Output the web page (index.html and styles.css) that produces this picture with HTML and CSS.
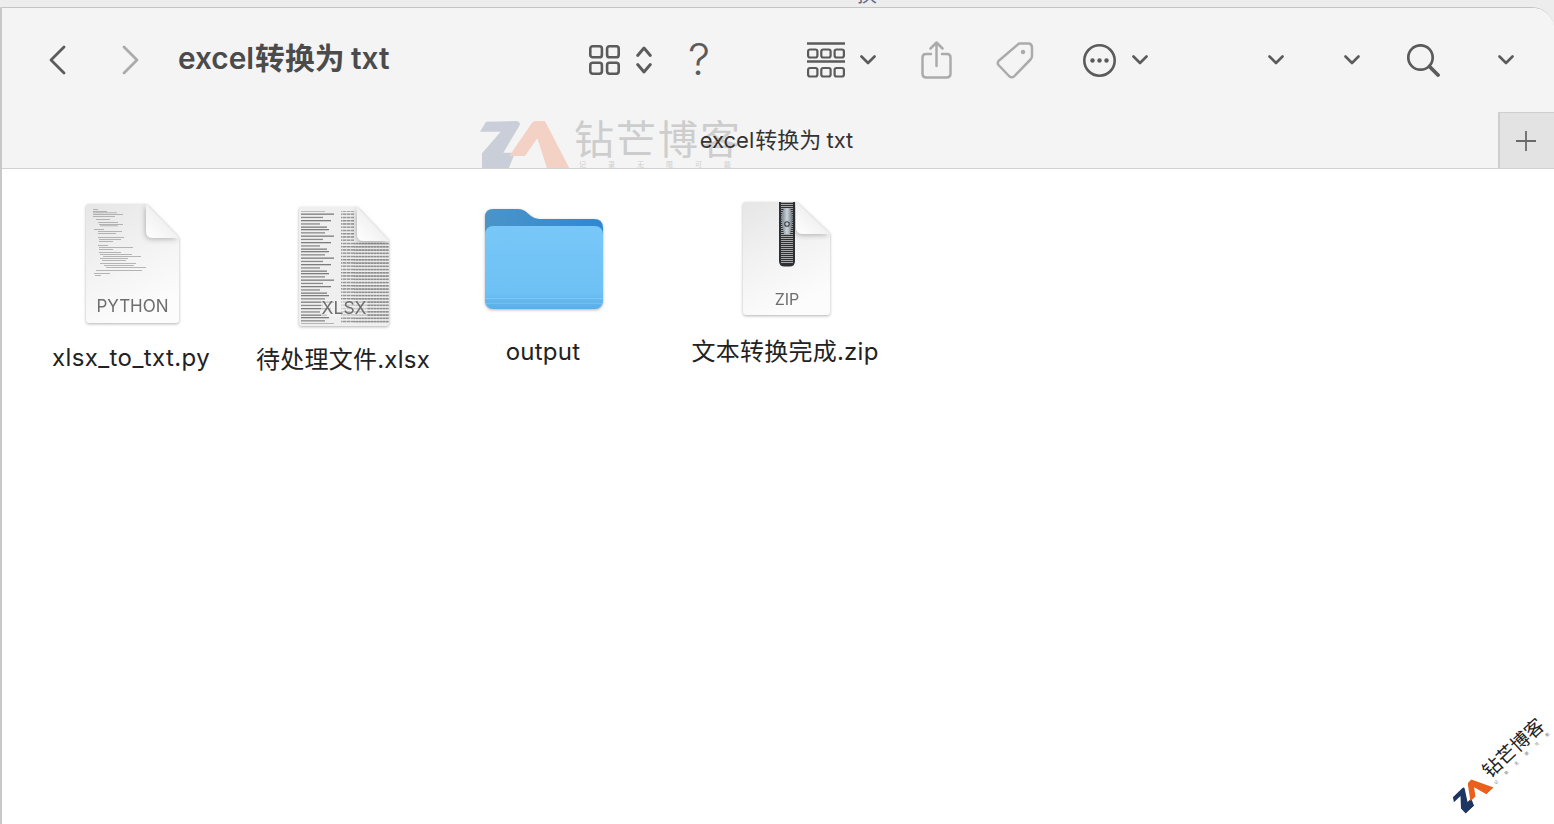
FILE: index.html
```html
<!DOCTYPE html>
<html lang="zh-CN">
<head>
    <meta charset="UTF-8">
    <title>excel转换为 txt</title>
    <link rel="stylesheet" href="styles.css">
</head>
<body>
    <svg class="defs" width="0" height="0">
        <symbol id="chev" viewBox="0 0 16 10"><path d="M1.500 1.500 8 8l6.500-6.500" fill="none" stroke="currentColor" stroke-width="2.600" stroke-linecap="round" stroke-linejoin="round"/></symbol>
        <symbol id="za-z" viewBox="0 0 300 180"><path d="M48 35 138 33Q152 34 149 46L100 128H135L115 178H36V130L92 65H30Z"/></symbol>
        <symbol id="za-a" viewBox="0 0 300 180"><path d="M118 138 185 40Q190 33 198 33H225L300 178H232L202 85 165 138Z"/></symbol>
    </svg>

    <div class="top-strip"><span class="behind-glyph">换</span></div>

    <div class="window">
        <div class="toolbar">
            <svg class="ico back" width="18" height="30" viewBox="0 0 18 30"><path d="M16 2 3 15l13 13" fill="none" stroke="currentColor" stroke-width="2.800" stroke-linecap="round" stroke-linejoin="round"/></svg>
            <svg class="ico off ml-56" width="18" height="30" viewBox="0 0 18 30"><path d="M2 2l13 13L2 28" fill="none" stroke="currentColor" stroke-width="2.800" stroke-linecap="round" stroke-linejoin="round"/></svg>
            <div class="title ml-38">excel<span class="title-cjk">转换为</span> txt</div>

            <svg class="ico ml-199" width="31" height="30" viewBox="0 0 31 30"><g fill="none" stroke="currentColor" stroke-width="2.600"><rect x="1.300" y="1.300" width="11.600" height="11" rx="2.400"/><rect x="18.100" y="1.300" width="11.600" height="11" rx="2.400"/><rect x="1.300" y="17.700" width="11.600" height="11" rx="2.400"/><rect x="18.100" y="17.700" width="11.600" height="11" rx="2.400"/></g></svg>
            <svg class="ico ml-16" width="16" height="30" viewBox="0 0 16 30"><path d="M1.700 10.500 8 3l6.300 7.500M1.700 19.500 8 27l6.300-7.500" fill="none" stroke="currentColor" stroke-width="2.900" stroke-linecap="round" stroke-linejoin="round"/></svg>
            <span class="help ml-36">?</span>

            <svg class="ico ml-98" width="38" height="36" viewBox="0 0 38 36"><g fill="none" stroke="currentColor"><path d="M0 1.500H38M0 19.500H38" stroke-width="2.600"/><g stroke-width="2.200"><rect x="1.100" y="7.500" width="9.300" height="8" rx="2"/><rect x="14.300" y="7.500" width="9.300" height="8" rx="2"/><rect x="27.600" y="7.500" width="9.300" height="8" rx="2"/><rect x="1.100" y="26" width="9.300" height="8.500" rx="2"/><rect x="14.300" y="26" width="9.300" height="8.500" rx="2"/><rect x="27.600" y="26" width="9.300" height="8.500" rx="2"/></g></g></svg>
            <svg class="chev ml-15" width="16" height="10"><use href="#chev"/></svg>

            <svg class="ico off ml-45" width="31" height="38" viewBox="0 0 31 38"><g fill="none" stroke="currentColor" stroke-width="2.500" stroke-linecap="round" stroke-linejoin="round"><path d="M10 13H5Q1.500 13 1.500 16.500V32.500Q1.500 36.500 5.500 36.500H25.500Q29.500 36.500 29.500 32.500V16.500Q29.500 13 26 13H21"/><path d="M15.500 25V2M9.500 7.500 15.500 1.500l6 6"/></g></svg>
            <svg class="ico off ml-44" width="38" height="38" viewBox="0 0 38 38"><g fill="none" stroke="currentColor" stroke-width="2.500" stroke-linejoin="round"><path d="M23 2.500 33 2.500Q36 3 36 7V15Q36 17 34.500 18.500L18 35.500Q15.500 37 13.500 35.500L2.500 24Q1 22 2.500 20Z"/></g><circle cx="27" cy="11" r="2.200" fill="currentColor"/></svg>
            <svg class="ico ml-49" width="33" height="33" viewBox="0 0 33 33"><circle cx="16.500" cy="16.500" r="15.200" fill="none" stroke="currentColor" stroke-width="2.600"/><circle cx="9.500" cy="16.500" r="2.200" fill="currentColor"/><circle cx="16.500" cy="16.500" r="2.200" fill="currentColor"/><circle cx="23.500" cy="16.500" r="2.200" fill="currentColor"/></svg>
            <svg class="chev ml-16" width="16" height="10"><use href="#chev"/></svg>
            <svg class="chev ml-120" width="16" height="10"><use href="#chev"/></svg>
            <svg class="chev ml-60" width="16" height="10"><use href="#chev"/></svg>
            <svg class="ico ml-47" width="33" height="33" viewBox="0 0 33 33"><g fill="none" stroke="currentColor" stroke-linecap="round"><circle cx="13.500" cy="13.500" r="12.200" stroke-width="2.700"/><path d="M22.500 22.500 31 31" stroke-width="3.800"/></g></svg>
            <svg class="chev ml-58" width="16" height="10"><use href="#chev"/></svg>
        </div>

        <div class="tabbar">
            <div class="faded-mark">
                <svg class="za-z" width="100" height="60"><use href="#za-z"/></svg>
                <svg class="za-a" width="100" height="60"><use href="#za-a"/></svg>
                <div class="faded-words">
                    <div class="faded-name">钻芒博客</div>
                    <div class="faded-sub">记录无限可能</div>
                </div>
            </div>
            <div class="tab-title">excel<span class="tab-cjk">转换为</span> txt</div>
            <div class="tab-add">
                <svg width="20" height="20" viewBox="0 0 20 20"><path d="M10 0V20M0 10H20" stroke="currentColor" stroke-width="1.800"/></svg>
            </div>
        </div>

        <div class="files">
            <div class="file file-py">
                <svg class="doc" width="93" height="120" viewBox="0 0 93 120">
                    <defs>
                        <linearGradient id="paper" x1="0" y1="0" x2="0.4" y2="1"><stop offset="0" stop-color="#e6e6e6"/><stop offset="0.55" stop-color="#f3f3f3"/><stop offset="1" stop-color="#fcfcfc"/></linearGradient>
                        <linearGradient id="fold" x1="0" y1="1" x2="1" y2="0"><stop offset="0" stop-color="#ffffff"/><stop offset="0.55" stop-color="#f0f0f0"/><stop offset="1" stop-color="#c8c8c8"/></linearGradient>
                        <filter id="fold-shade" x="-40%" y="-40%" width="180%" height="180%"><feDropShadow dx="-1" dy="1.500" stdDeviation="2.500" flood-color="#000" flood-opacity="0.250"/></filter>
                    </defs>
                    <path d="M3 0H60L93 34V116Q93 119 90 119H3Q0 119 0 116V3Q0 0 3 0Z" fill="url(#paper)"/>
                    <g fill="#9a9a9a">
                        <rect x="7" y="5" width="5" height="0.700"/><rect x="7" y="7" width="14" height="0.700"/><rect x="7" y="8.500" width="24" height="0.700"/><rect x="7" y="10" width="30" height="0.700"/><rect x="7" y="12" width="22" height="0.700"/>
                        <rect x="10" y="15" width="14" height="0.700"/><rect x="12" y="18" width="20" height="0.700"/><rect x="13" y="20" width="24" height="0.700"/><rect x="14" y="21.500" width="18" height="0.700"/>
                        <rect x="8" y="25" width="10" height="0.700"/><rect x="12" y="27" width="24" height="0.700"/><rect x="12" y="29" width="18" height="0.700"/><rect x="12" y="33" width="26" height="0.700"/>
                        <rect x="13" y="35" width="22" height="0.700"/><rect x="13" y="37" width="14" height="0.700"/><rect x="12" y="41" width="10" height="0.700"/><rect x="13" y="43" width="34" height="0.700"/>
                        <rect x="13" y="45" width="14" height="0.700"/><rect x="13" y="48" width="22" height="0.700"/><rect x="14" y="50" width="32" height="0.700"/><rect x="17" y="52" width="38" height="0.700"/>
                        <rect x="14" y="54" width="28" height="0.700"/><rect x="16" y="56" width="24" height="0.700"/><rect x="14" y="59" width="36" height="0.700"/><rect x="18" y="61" width="30" height="0.700"/><rect x="20" y="63" width="40" height="0.700"/>
                        <rect x="10" y="66" width="46" height="0.700"/><rect x="8" y="69" width="16" height="0.700"/><rect x="9" y="71" width="6" height="0.700"/>
                    </g>
                    <path d="M60 0 93 34H67Q60 34 60 27Z" fill="url(#fold)" filter="url(#fold-shade)"/>
                    <text class="doc-kind" x="46.500" y="108" text-anchor="middle" font-size="17">PYTHON</text>
                </svg>
                <div class="file-name">xlsx_to_txt.py</div>
            </div>

            <div class="file file-xlsx">
                <svg class="doc" width="90" height="120" viewBox="0 0 90 120">
                    <defs>
                        <pattern id="rows-a" width="42" height="22" patternUnits="userSpaceOnUse">
                            <rect x="0" y="0" width="30" height="1.300" fill="#7c7c7c"/><rect x="0" y="3.200" width="26" height="1.300" fill="#8a8a8a"/><rect x="2" y="6.500" width="33" height="1.300" fill="#7c7c7c"/><rect x="0" y="9.800" width="24" height="1.300" fill="#8a8a8a"/><rect x="2" y="13" width="30" height="1.300" fill="#7c7c7c"/><rect x="0" y="16.300" width="21" height="1.300" fill="#8a8a8a"/><rect x="0" y="19.500" width="28" height="1.300" fill="#7c7c7c"/>
                        </pattern>
                        <pattern id="rows-b" width="4" height="3.250" patternUnits="userSpaceOnUse"><rect width="3.500" height="1.400" fill="#8c8c8c"/></pattern>
                        <pattern id="rows-c" width="3" height="3.250" patternUnits="userSpaceOnUse"><rect width="2.700" height="1.700" fill="#8e8e8e"/></pattern>
                    </defs>
                    <path d="M2 0H58L90 34V116Q90 119 87 119H2Q0 119 0 116V2Q0 0 2 0Z" fill="#efefef"/>
                    <rect x="2" y="4" width="38" height="113" fill="url(#rows-a)"/>
                    <rect x="42" y="4" width="13" height="113" fill="url(#rows-b)"/>
                    <rect x="55" y="34" width="35" height="83" fill="url(#rows-c)"/>
                    <rect x="22" y="93" width="46" height="17" fill="#f4f4f4" opacity="0.550"/>
                    <path d="M58 0 90 34H65Q58 34 58 27Z" fill="url(#fold)" filter="url(#fold-shade)"/>
                    <text class="doc-kind" x="45" y="107" text-anchor="middle" font-size="17.500">XLSX</text>
                </svg>
                <div class="file-name">待处理文件.xlsx</div>
            </div>

            <div class="file file-dir">
                <svg class="folder" width="118" height="101" viewBox="0 0 118 101">
                    <defs>
                        <linearGradient id="dir-back" x1="0" y1="0" x2="1" y2="0"><stop offset="0" stop-color="#4b94c9"/><stop offset="1" stop-color="#2f88d3"/></linearGradient>
                        <linearGradient id="dir-front" x1="0" y1="0" x2="0" y2="1"><stop offset="0" stop-color="#78c7f8"/><stop offset="0.8" stop-color="#6ec1f5"/><stop offset="1" stop-color="#5aaee8"/></linearGradient>
                    </defs>
                    <path d="M8 0H33Q37 0 40 2L46 7Q50 10 54 10H109Q118 10 118 19V50H0V8Q0 0 8 0Z" fill="url(#dir-back)"/>
                    <rect x="0" y="17" width="118" height="83" rx="8" fill="url(#dir-front)"/>
                    <rect x="0" y="89" width="118" height="1" fill="#8ccdf6" opacity="0.700"/>
                    <rect x="0" y="94" width="118" height="1" fill="#8ccdf6" opacity="0.400"/>
                </svg>
                <div class="file-name">output</div>
            </div>

            <div class="file file-zip">
                <svg class="doc" width="87" height="114" viewBox="0 0 87 114">
                    <defs>
                        <pattern id="teeth" width="12" height="2" patternUnits="userSpaceOnUse"><rect width="12" height="1" fill="#a8a8a8"/></pattern>
                        <linearGradient id="slider" x1="0" y1="0" x2="1" y2="0"><stop offset="0" stop-color="#6f7a82"/><stop offset="0.5" stop-color="#ccd4da"/><stop offset="1" stop-color="#66707a"/></linearGradient>
                    </defs>
                    <path d="M3 0H53L87 32V110Q87 113 84 113H3Q0 113 0 110V3Q0 0 3 0Z" fill="url(#paper)"/>
                    <path d="M36 0H52V59Q52 64.500 46.500 64.500H41.500Q36 64.500 36 59Z" fill="#2e3134"/>
                    <rect x="38" y="0" width="12" height="62" fill="url(#teeth)"/>
                    <path d="M41 6H47L50 15 49 22 47 32H41L39 22 38 15Z" fill="url(#slider)"/>
                    <circle cx="44" cy="22" r="2.300" fill="none" stroke="#3e4348" stroke-width="1.100"/>
                    <path d="M53 0 87 32H60Q53 32 53 25Z" fill="url(#fold)" filter="url(#fold-shade)"/>
                    <text class="doc-kind" x="44" y="103" text-anchor="middle" font-size="16">ZIP</text>
                </svg>
                <div class="file-name">文本转换完成.zip</div>
            </div>
        </div>
    </div>

    <div class="corner-mark">
        <span class="corner-logo">
            <svg class="za-navy" width="44" height="26"><use href="#za-z"/></svg>
            <svg class="za-orange" width="44" height="26"><use href="#za-a"/></svg>
        </span>
        <span class="corner-words">
            <span class="corner-name">钻芒博客</span>
            <span class="corner-sub">记录无限可能</span>
        </span>
    </div>
</body>
</html>
```

FILE: styles.css
```css
* {
    box-sizing: border-box;
}
html, body {
    height: 100%;
}
body {
    margin: 0;
    background: #ededed;
    font-family: Inter, "Noto Sans CJK SC", sans-serif;
    display: flex;
    flex-direction: column;
    overflow: hidden;
    position: relative;
}
.defs {
    position: absolute;
}
.top-strip {
    height: 7px;
    position: relative;
    overflow: hidden;
    flex: none;
}
.behind-glyph {
    position: absolute;
    left: 857px;
    top: -15px;
    font-size: 20px;
    line-height: 20px;
    color: #5d6b8c;
}
.window {
    flex: 1;
    display: flex;
    flex-direction: column;
    background: #fff;
    border-top: 1px solid #c4c4c4;
    border-left: 2px solid #c8c8c8;
    border-top-right-radius: 22px;
    overflow: hidden;
}
.toolbar {
    height: 104px;
    flex: none;
    display: flex;
    align-items: center;
    padding-left: 46px;
    background: #f4f4f4;
    color: #5b5b5b;
}
.ico, .chev {
    display: block;
    flex: none;
}
.off {
    color: #ababab;
}
.title {
    width: 212px;
    flex: none;
    font-size: 29.800px;
    font-weight: 600;
    line-height: 36px;
    margin-top: -4px;
    white-space: nowrap;
    word-spacing: -1px;
    color: #4b4b4b;
}
.title-cjk {
    margin-left: 1px;
}
.help {
    width: 21px;
    flex: none;
    font-size: 44px;
    font-weight: 300;
    line-height: 44px;
    text-align: center;
    margin-top: -2px;
}
.ml-15 { margin-left: 15px; }
.ml-16 { margin-left: 16px; }
.ml-36 { margin-left: 36px; }
.ml-38 { margin-left: 38px; }
.ml-44 { margin-left: 44px; }
.ml-45 { margin-left: 45px; }
.ml-47 { margin-left: 47px; }
.ml-49 { margin-left: 49px; }
.ml-56 { margin-left: 56px; }
.ml-58 { margin-left: 58px; }
.ml-60 { margin-left: 60px; }
.ml-98 { margin-left: 98px; }
.ml-120 { margin-left: 120px; }
.ml-199 { margin-left: 199px; }

.tabbar {
    height: 57px;
    flex: none;
    display: flex;
    background: #f4f4f4;
    border-bottom: 1px solid #d2d2d2;
    position: relative;
    overflow: hidden;
}
.tab-title {
    flex: 1;
    padding-left: 53px;
    text-align: center;
    font-size: 22px;
    line-height: 56px;
    color: #333;
    position: relative;
    word-spacing: -1px;
}
.tab-cjk {
    margin-left: 1px;
}
.tab-add {
    width: 56px;
    flex: none;
    display: flex;
    align-items: center;
    justify-content: center;
    background: #e3e3e3;
    border-left: 2px solid #cfcfcf;
    border-top: 1px solid #cfcfcf;
    padding-right: 2px;
    color: #6a6a6a;
}
.faded-mark {
    position: absolute;
    left: 468px;
    top: -2px;
    width: 290px;
    height: 60px;
}
.faded-mark svg {
    position: absolute;
    left: 0;
    top: 0;
}
.za-z { fill: #c9ced9; }
.za-a { fill: #f3d2c5; }
.faded-words {
    position: absolute;
    left: 104px;
    top: 9px;
}
.faded-name {
    font-size: 40px;
    line-height: 42px;
    letter-spacing: 2px;
    color: #cdcdcd;
    white-space: nowrap;
}
.faded-sub {
    font-family: "Noto Sans CJK SC", sans-serif;
    font-size: 7px;
    line-height: 7px;
    margin-left: 5px;
    letter-spacing: 22px;
    color: #cfcfcf;
    white-space: nowrap;
}

.files {
    flex: 1;
    display: flex;
    align-items: flex-start;
    padding-left: 28px;
}
.file {
    display: flex;
    flex-direction: column;
    align-items: center;
    flex: none;
}
.file-py { width: 202px; margin-top: 35px; gap: 19px; }
.file-xlsx { width: 222px; margin-top: 38px; gap: 18px; }
.file-dir { width: 178px; margin-top: 40px; gap: 27px; }
.file-zip { width: 306px; margin-top: 33px; gap: 21px; }
.doc {
    display: block;
    overflow: visible;
    margin-left: 2px;
    filter: drop-shadow(0 1.500px 1.500px rgba(0, 0, 0, 0.3));
}
.doc-kind {
    font-family: Inter, sans-serif;
    fill: #6e6e6e;
}
.folder {
    display: block;
    margin-left: 2px;
    filter: drop-shadow(0 1px 1.500px rgba(0, 0, 0, 0.3));
}
.file-name {
    font-size: 24px;
    line-height: 30px;
    letter-spacing: 0.250px;
    color: #222;
    white-space: nowrap;
}
.file-py .file-name {
    letter-spacing: 0.400px;
}

.corner-mark {
    position: absolute;
    left: 1453px;
    top: 795px;
    display: flex;
    align-items: center;
    transform: rotate(-43deg);
    transform-origin: left center;
}
.corner-logo {
    display: block;
    position: relative;
    width: 36px;
    height: 26px;
    flex: none;
}
.corner-logo svg {
    position: absolute;
    left: 0;
    top: 0;
}
.za-navy { fill: #1d3563; }
.za-orange { fill: #e8601c; }
.corner-words {
    display: flex;
    flex-direction: column;
    margin-left: 11px;
}
.corner-name {
    font-size: 19px;
    line-height: 21px;
    color: #222;
    white-space: nowrap;
}
.corner-sub {
    font-size: 4px;
    line-height: 5px;
    letter-spacing: 10px;
    color: #777;
    white-space: nowrap;
}
```
